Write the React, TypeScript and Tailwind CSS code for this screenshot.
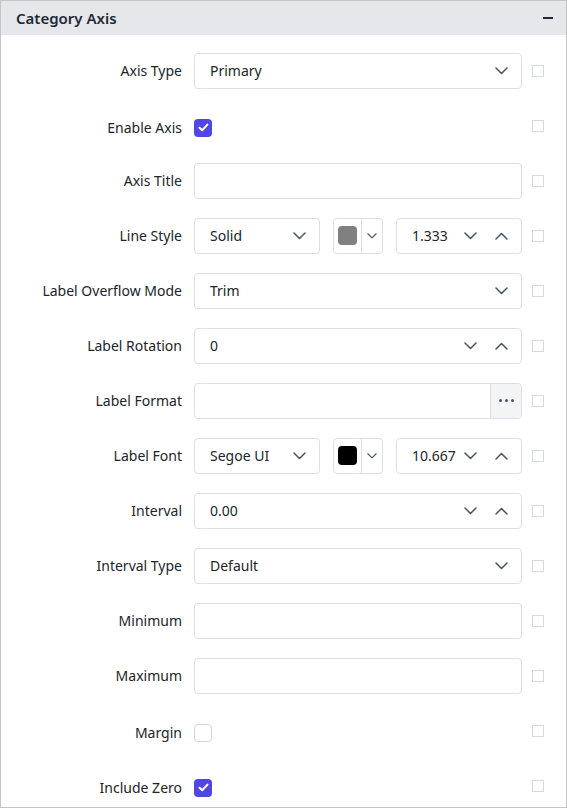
import React from "react";

const font = { fontFamily: '"Segoe UI", "Noto Sans", "Open Sans", sans-serif' };

function Chevron({ up = false, size = 13 }: { up?: boolean; size?: number }) {
  return (
    <svg width={size} height={Math.round(size * 0.6)} viewBox="0 0 13 8" fill="none">
      <path
        d={up ? "M1 7 L6.5 1.5 L12 7" : "M1 1 L6.5 6.5 L12 1"}
        stroke="#4b5563"
        strokeWidth="1.5"
        strokeLinecap="round"
        strokeLinejoin="round"
      />
    </svg>
  );
}

function SideBox() {
  return <div className="w-[12px] h-[12px] border border-[#d6d9dd] bg-white shrink-0" />;
}

function Select({ value, className = "" }: { value: string; className?: string }) {
  return (
    <div
      className={`h-[36px] flex items-center justify-between bg-white border border-[#dcdfe3] rounded-[4px] pl-[15px] pr-[13px] ${className}`}
    >
      <span className="text-[14px] text-[#212529]">{value}</span>
      <Chevron />
    </div>
  );
}

function TextBox({ className = "" }: { className?: string }) {
  return <div className={`h-[36px] bg-white border border-[#dcdfe3] rounded-[4px] ${className}`} />;
}

function Spinner({ value, className = "" }: { value: string; className?: string }) {
  return (
    <div
      className={`h-[36px] flex items-center bg-white border border-[#dcdfe3] rounded-[4px] pl-[15px] pr-[13px] ${className}`}
    >
      <span className="text-[14px] text-[#212529] flex-1">{value}</span>
      <div className="flex items-center gap-[18px]">
        <Chevron />
        <Chevron up />
      </div>
    </div>
  );
}

function ColorPick({ color }: { color: string }) {
  return (
    <div className="h-[36px] w-[50px] flex items-stretch bg-white border border-[#dcdfe3] rounded-[4px] shrink-0">
      <div className="flex items-center justify-center w-[28px] border-r border-[#dcdfe3]">
        <div className="w-[19px] h-[19px] rounded-[4px]" style={{ backgroundColor: color }} />
      </div>
      <div className="flex-1 flex items-center justify-center">
        <Chevron size={10} />
      </div>
    </div>
  );
}

function Check({ on }: { on: boolean }) {
  return on ? (
    <div className="w-[18px] h-[18px] rounded-[4px] bg-[#4f46e5] flex items-center justify-center">
      <svg width="11" height="9" viewBox="0 0 11 9" fill="none">
        <path d="M1.5 4.8 L4.2 7.3 L9.5 1.6" stroke="white" strokeWidth="2" strokeLinecap="round" strokeLinejoin="round" />
      </svg>
    </div>
  ) : (
    <div className="w-[18px] h-[18px] rounded-[4px] bg-white border border-[#d1d5db]" />
  );
}

function Row({
  label,
  children,
  shifted = false,
}: {
  label: string;
  children: React.ReactNode;
  shifted?: boolean;
}) {
  return (
    <div className="h-[55px] flex items-center">
      <div
        className={`w-[181px] text-right text-[14px] text-[#212529] shrink-0 ${shifted ? "translate-y-[2px]" : ""}`}
      >
        {label}
      </div>
      <div className={`ml-[12px] w-[328px] flex items-center ${shifted ? "translate-y-[2px]" : ""}`}>
        {children}
      </div>
      <div className="ml-[10px]">
        <SideBox />
      </div>
    </div>
  );
}

export default function App() {
  return (
    <div className="w-[567px] h-[808px] border border-[#c4c4c4] bg-white overflow-hidden" style={font}>
      <div className="h-[34px] bg-[#e6e7eb] flex items-center justify-between pl-[15px] pr-[13px]">
        <span className="text-[15px] font-semibold text-[#1f2937]">Category Axis</span>
        <div className="w-[10px] h-[1.5px] bg-[#1f2937]" />
      </div>
      <div className="pt-[8px]">
        <Row label="Axis Type">
          <Select value="Primary" className="w-full" />
        </Row>
        <Row label="Enable Axis" shifted>
          <Check on />
        </Row>
        <Row label="Axis Title">
          <TextBox className="w-full" />
        </Row>
        <Row label="Line Style">
          <Select value="Solid" className="w-[126px] shrink-0" />
          <div className="ml-[13px]">
            <ColorPick color="#808080" />
          </div>
          <Spinner value="1.333" className="ml-[13px] flex-1" />
        </Row>
        <Row label="Label Overflow Mode">
          <Select value="Trim" className="w-full" />
        </Row>
        <Row label="Label Rotation">
          <Spinner value="0" className="w-full" />
        </Row>
        <Row label="Label Format">
          <div className="h-[36px] w-full flex bg-white border border-[#dcdfe3] rounded-[4px] overflow-hidden">
            <div className="flex-1" />
            <div className="w-[31px] bg-[#f3f4f6] border-l border-[#dcdfe3] flex items-center justify-center gap-[3px]">
              <span className="w-[3px] h-[3px] rounded-full bg-[#4b5563]" />
              <span className="w-[3px] h-[3px] rounded-full bg-[#4b5563]" />
              <span className="w-[3px] h-[3px] rounded-full bg-[#4b5563]" />
            </div>
          </div>
        </Row>
        <Row label="Label Font">
          <Select value="Segoe UI" className="w-[126px] shrink-0" />
          <div className="ml-[13px]">
            <ColorPick color="#000000" />
          </div>
          <Spinner value="10.667" className="ml-[13px] flex-1" />
        </Row>
        <Row label="Interval">
          <Spinner value="0.00" className="w-full" />
        </Row>
        <Row label="Interval Type">
          <Select value="Default" className="w-full" />
        </Row>
        <Row label="Minimum">
          <TextBox className="w-full" />
        </Row>
        <Row label="Maximum">
          <TextBox className="w-full" />
        </Row>
        <Row label="Margin" shifted>
          <Check on={false} />
        </Row>
        <Row label="Include Zero" shifted>
          <Check on />
        </Row>
      </div>
    </div>
  );
}
